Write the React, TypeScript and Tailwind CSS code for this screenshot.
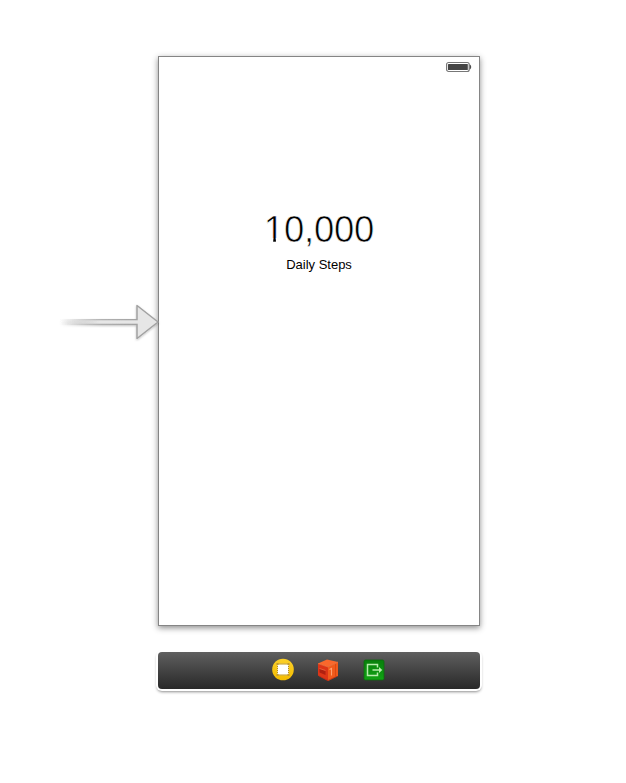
function Battery() {
  return (
    <svg width="26" height="12" viewBox="0 0 26 12" className="absolute left-[287px] top-[4px]">
      <rect x="0.6" y="1.500" width="22.600" height="9" rx="2" fill="#fff" stroke="#777" strokeWidth="1.2" />
      <rect x="2" y="3" width="19.800" height="6" rx="0.5" fill="#454545" />
      <path d="M24 3.800 Q26 6 24 8.200Z" fill="#444" stroke="#444" strokeWidth="0.4" />
    </svg>
  );
}

function EntryArrow() {
  return (
    <svg width="106" height="44" viewBox="0 0 106 44" className="absolute -left-[103px] top-[243px]">
      <defs>
        <linearGradient id="shaft" x1="0" x2="1">
          <stop offset="0" stopColor="#aaa" stopOpacity="0" />
          <stop offset="0.55" stopColor="#aaa" stopOpacity="0.9" />
          <stop offset="1" stopColor="#a2a2a2" />
        </linearGradient>
        <linearGradient id="core" x1="0" x2="1">
          <stop offset="0" stopColor="#e6e6e6" stopOpacity="0" />
          <stop offset="0.5" stopColor="#e6e6e6" />
        </linearGradient>
        <filter id="arrowShadow" x="-10%" y="-20%" width="120%" height="150%">
          <feDropShadow dx="0" dy="1" stdDeviation="1" floodColor="#000" floodOpacity="0.25" />
        </filter>
      </defs>
      <g filter="url(#arrowShadow)">
        <rect x="4" y="19" width="77" height="6" fill="url(#shaft)" />
        <path d="M81 5.500V38.500L102 22Z" fill="#e6e6e6" stroke="#a2a2a2" strokeWidth="1.5" strokeLinejoin="round" />
        <rect x="4" y="20.300" width="79" height="3.400" fill="url(#core)" />
      </g>
    </svg>
  );
}

function ControllerIcon() {
  return (
    <svg width="24" height="24" viewBox="0 0 24 24">
      <defs>
        <linearGradient id="gold" x1="0" y1="0" x2="0" y2="1">
          <stop stopColor="#fbd02a" />
          <stop offset="1" stopColor="#f3bc00" />
        </linearGradient>
      </defs>
      <circle cx="12" cy="11.500" r="10.800" fill="url(#gold)" />
      <rect x="6.500" y="6" width="11" height="11" fill="#fff" stroke="#b98e12" />
      <rect x="6.500" y="6" width="11" height="11" fill="none" stroke="#ead9a0" strokeDasharray="1 1" />
      <path d="M5.500 5h2v2h-2zM16.500 5h2v2h-2zM5.500 16h2v2h-2zM16.500 16h2v2h-2z" fill="#c69b2b" />
    </svg>
  );
}

function ResponderIcon() {
  return (
    <svg width="24" height="24" viewBox="0 0 24 24">
      <path d="M2 5.500 11 1.500 22 4 12 9Z" fill="#f9682c" />
      <path d="M2 5.500 12 9V23L2 17.500Z" fill="#dc3517" />
      <path d="M12 9 22 4V18L12 23Z" fill="#f05a1b" />
      <path d="M2 5.500 12 9 22 4" fill="none" stroke="#fb8045" strokeWidth="0.6" />
      <path d="M3.500 10.500 9.500 12.500V17L3.500 14.500Z" fill="#b0200f" />
      <path d="M3.500 10.500 9.500 12.500" stroke="#f16a42" strokeWidth="0.8" />
      <path d="m13.500 11.500 2-1V17.500" fill="none" stroke="#ffa070" strokeWidth="1.1" />
      <path d="M19.500 6V18" stroke="#d8440f" strokeWidth="0.8" />
      <path d="M3 18 12 22.500 21 18.200" fill="none" stroke="#bd2812" strokeWidth="0.7" />
    </svg>
  );
}

function ExitIcon() {
  return (
    <svg width="24" height="24" viewBox="0 0 24 24">
      <defs>
        <linearGradient id="green" x1="0" y1="0" x2="0" y2="1">
          <stop stopColor="#087f0c" />
          <stop offset="1" stopColor="#10a313" />
        </linearGradient>
      </defs>
      <rect x="2" y="2" width="20" height="20" rx="1.500" fill="url(#green)" stroke="#0c690e" strokeWidth="0.8" />
      <path d="M15.500 9.500V6.500H5.500V17.500H15.500V14.500M10.500 12H18" fill="none" stroke="#b6ecab" strokeWidth="1.5" />
      <path d="M17 9 20.300 12 17 15Z" fill="#b6ecab" />
    </svg>
  );
}

export default function App() {
  return (
    <main className="flex h-[783px] w-[626px] flex-col items-start bg-white pl-[158px] pt-[56px] font-['Liberation_Sans',sans-serif] text-black">
      <section className="relative flex h-[570px] w-[322px] flex-col items-center border border-[#858585] bg-white pt-[152px] shadow-[0_2px_6px_rgba(0,0,0,0.45)]">
        <Battery />
        <EntryArrow />
        <div className="flex h-[42px] text-[36.5px] leading-[42px] tracking-[-0.2px] [-webkit-text-stroke:0.65px_white]">
          <span className="block h-[42px] [clip-path:polygon(0_0,100%_0,100%_29px,12.100px_29px,12.100px_100%,9.500px_100%,9.500px_29px,0_29px)]">1</span>
          <span>0,000</span>
        </div>
        <div className="mt-[6px] h-[16px] text-[13px] leading-[16px]">Daily Steps</div>
      </section>
      <nav className="mt-[26px] flex h-[37px] w-[322px] items-center justify-center gap-[21.500px] rounded-[4px] bg-linear-to-b from-[#606060] to-[#292929] pb-px pl-[18px] shadow-[0_0_0_2px_white,0_2px_3px_1px_rgba(0,0,0,0.45)]">
        <ControllerIcon />
        <ResponderIcon />
        <ExitIcon />
      </nav>
    </main>
  );
}
